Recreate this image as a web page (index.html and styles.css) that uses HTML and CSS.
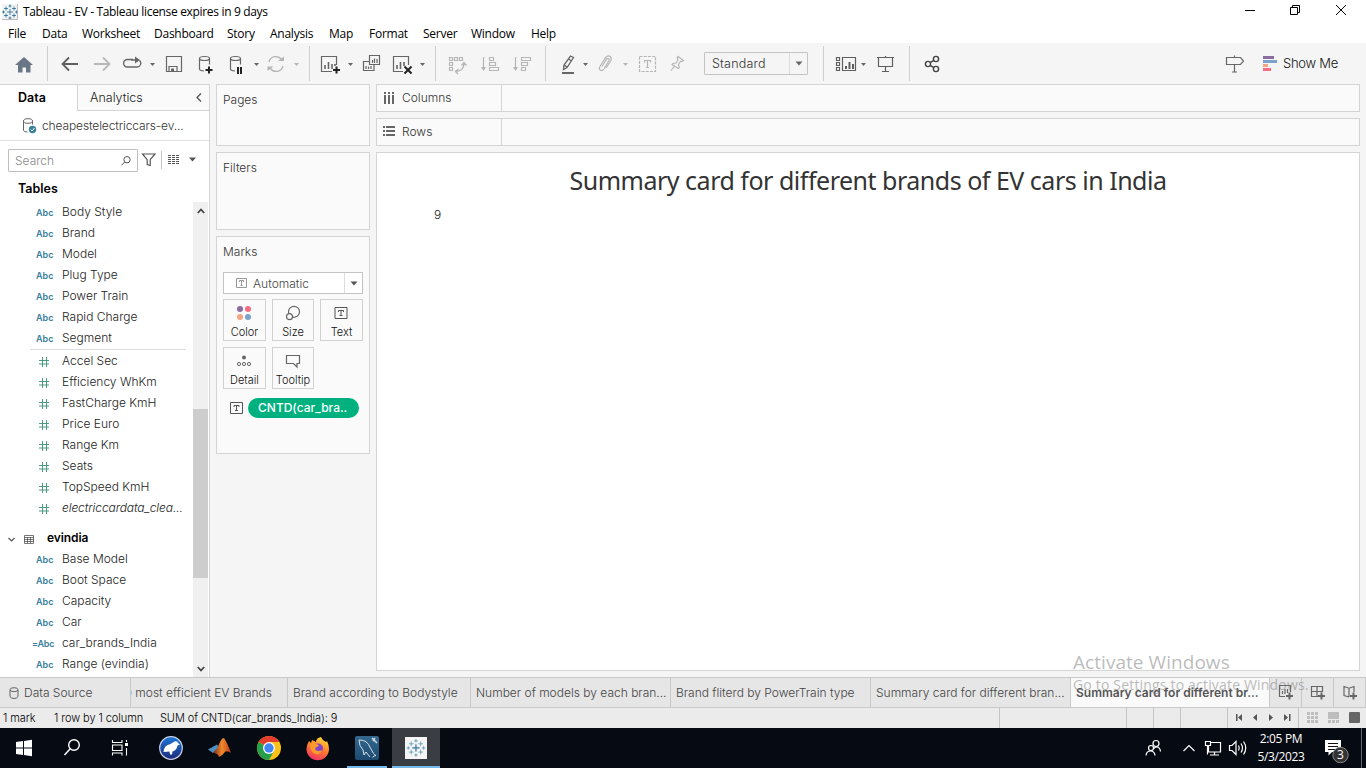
FILE: index.html
```html
<!DOCTYPE html>
<html lang="en">
<head>
<meta charset="utf-8">
<title>Tableau - EV</title>
<link rel="stylesheet" href="styles.css">
</head>
<body>
<svg class="defs" width="0" height="0" aria-hidden="true">
  <defs>
    <g id="mark">
      <path d="M8 5v6M5 8h6" />
      <path d="M4 2.5v4M2 4.5h4M12 2.5v4M10 4.5h4M4 9.500v4M2 11.500h4M12 9.500v4M10 11.500h4M8 .5v3M6.500 2h3M8 12.500v3M6.500 14h3M1.500 6.500v3M0 8h3M14.500 6.500v3M13 8h3" />
    </g>
    <g id="plus"><path d="M0 3.500h7M3.500 0v7" /></g>
    <path id="hash" d="M3.500 0v10M7.500 0v10M0 3.500h10M0 7h10" />
  </defs>
</svg>

<header class="titlebar">
  <svg class="logo" width="16" height="16" viewBox="0 0 16 16"><rect width="16" height="16" fill="#f2f2f2"/><use href="#mark" stroke="#1f6f9c" stroke-width=".8" fill="none"/><path d="M0 15.500h15.500V0" fill="none" stroke="#bbb"/></svg>
  <span class="titletext">Tableau - EV - Tableau license expires in 9 days</span>
  <svg class="winbtns" width="126" height="24" viewBox="1240 0 126 24" fill="none" stroke="#000"><path d="M1245 10.500h10M1290.500 7.500h7v7h-7zM1292.500 7.500v-2h7v7h-2M1336 5l10 10M1346 5l-10 10"/></svg>
</header>
<nav class="menu">
  <span style="width:34px">File</span><span style="width:40px">Data</span><span style="width:72px">Worksheet</span><span style="width:73px">Dashboard</span><span style="width:43px">Story</span><span style="width:59px">Analysis</span><span style="width:40px">Map</span><span style="width:54px">Format</span><span style="width:48px">Server</span><span style="width:60px">Window</span><span>Help</span>
</nav>

<div class="toolbar">
  <svg width="47" height="41" viewBox="0 43 47 41"><path d="M24 57l9 8h-2.500v7.500h-4.500v-5h-3.500v5h-4.500V65H15z" fill="#6a7685"/></svg>
  <i class="sep"></i>
  <svg width="68" height="41" viewBox="48 43 68 41" fill="none" stroke-width="1.800"><path d="M78 64H63M69 57.500L62.500 64l6.500 6.500" stroke="#5f5f5f"/><path d="M94 64h15M103 57.500l6.500 6.500-6.500 6.500" stroke="#b8b8b8"/></svg>
  <svg width="44" height="41" viewBox="116 43 44 41"><path d="M133 59.500h-6a4 3.800 0 0 0 0 7.500h10a3.700 3.700 0 0 0 2.500-6.500M131 60h6" fill="none" stroke="#666" stroke-width="1.300"/><path d="M135 56.500l5 3.500-5 3.500z" fill="#666"/><path d="M150 63h5l-2.500 3z" fill="#666"/></svg>
  <svg width="30" height="41" viewBox="160 43 30 41" fill="none" stroke="#666" stroke-width="1.200"><path d="M166.500 56.500h15v15h-15zM169 71v-4.500h8V71"/><path d="M171 68.500h3v3h-3z" fill="#666" stroke="none"/></svg>
  <svg width="30" height="41" viewBox="190 43 30 41" fill="none" stroke="#666" stroke-width="1.200"><ellipse cx="204.500" cy="58.500" rx="5" ry="2"/><path d="M199.500 58.500v10.500q0 1.800 4.500 2M209.500 58.500v6"/><use href="#plus" x="205.500" y="66.500" stroke="#222" stroke-width="2"/></svg>
  <svg width="42" height="41" viewBox="220 43 42 41" fill="none" stroke="#666" stroke-width="1.200"><ellipse cx="235.500" cy="58.500" rx="5" ry="2"/><path d="M230.500 58.500v10.500q0 1.800 4.500 2M240.500 58.500v6"/><path d="M238 67v7M241 67v7" stroke="#222" stroke-width="2"/><path d="M254 63h5l-2.500 3z" fill="#666" stroke="none"/></svg>
  <svg width="47" height="41" viewBox="262 43 47 41" fill="none" stroke="#b5b5b5" stroke-width="1.300"><path d="M269 62a7 7 0 0 1 12.500-2.500M283 66a7 7 0 0 1-12.500 2.500"/><path d="M278 61h6v-4.500zM267.500 66.500h6l-6 4.500z" fill="#b5b5b5" stroke="none"/><path d="M294 63h5l-2.500 3z" fill="#b5b5b5" stroke="none"/></svg>
  <i class="sep"></i>
  <svg width="47" height="41" viewBox="310 43 47 41" fill="none" stroke="#666"><path d="M332 71.500h-10.500v-15h15V65" stroke-width="1.200"/><path d="M325 69v-4M328.500 69v-7M332 69v-5M335 66v-2" stroke-width="1.600"/><use href="#plus" x="333" y="66.500" stroke="#222" stroke-width="2"/><path d="M348 63h5l-2.500 3z" fill="#666" stroke="none"/></svg>
  <svg width="29" height="41" viewBox="357 43 29 41" fill="none" stroke="#666" stroke-width="1.200"><path d="M369.500 55.500h10v9h-10zM369.500 61.500h-6v9h10.500v-6"/><path d="M372.500 63v-3M374.500 63v-4.500M377 63v-4M366 69v-3M368.500 69v-2.500M371 69v-3"/></svg>
  <svg width="49" height="41" viewBox="386 43 49 41" fill="none" stroke="#666"><path d="M403 71.500h-9.500v-15h15V65" stroke-width="1.200"/><path d="M397 69v-4M400.500 69v-7M404 66v-4" stroke-width="1.600"/><path d="M404.500 66.500l7 7M411.500 66.500l-7 7" stroke="#222" stroke-width="2"/><path d="M420 63h5l-2.500 3z" fill="#666" stroke="none"/></svg>
  <i class="sep"></i>
  <svg width="109" height="41" viewBox="436 43 109 41" fill="none" stroke="#b5b5b5" stroke-width="1.200">
    <path d="M449.500 57.500h3v3h-3zM454.500 57.500h3v3h-3zM459.500 57.500h3v3h-3zM449.500 62.500h3v3h-3zM449.500 67.500h3v3h-3zM464 63q0 8-8 8.500M461.500 65.500l2.500-3 2.500 3M458.500 69l-3 2.500 2.500 2.500"/>
    <path d="M483.500 57v12M489.500 57.500h4v3h-4zM489.500 62.500h6v3h-6zM489.500 67.500h9v3h-9zM515.500 57v12M521.500 57.500h9v3h-9zM521.500 62.500h6v3h-6zM521.500 67.500h4v3h-4z"/><path d="M481 67h5l-2.500 4zM513 67h5l-2.500 4z" fill="#b5b5b5" stroke="none"/>
  </svg>
  <i class="sep"></i>
  <svg width="44" height="41" viewBox="546 43 44 41"><path d="M570.500 56l3 1.500-6.500 10-3.500 2 .5-4.500zM568.500 59l3 2M564 65l3 2" fill="none" stroke="#666" stroke-width="1.300"/><path d="M562 72h12v2h-12zM583 63h5l-2.500 3z" fill="#666"/></svg>
  <svg width="42" height="41" viewBox="590 43 42 41"><path d="M602 66.500l4.500-7.500q1.500-1.500 2.500 0 .5 1-.5 2.500l-4.500 7.500q-2 2.500-3.800 1-1.700-1.500 0-4l5.500-8.500q2.500-2.500 4.500-1 2 1.500.5 4.500L606 68" fill="none" stroke="#b5b5b5" stroke-width="1.200"/><path d="M623 63h5l-2.500 3z" fill="#b5b5b5"/></svg>
  <svg width="60" height="41" viewBox="632 43 60 41" fill="none" stroke="#b5b5b5" stroke-width="1.200"><path d="M639.500 56.500h16v15h-16z" stroke-dasharray="3 1.200"/><path d="M644.500 62.500v-2h6v2M647.500 60.500v7M646 67.500h3M678 56.500l5.500 4-1.500 1-1.500-.2-2 3.200.7 3-1 1-6.200-4 1-1 3-.5 2-3.300-.8-1.800zM674.500 66l-3.500 4.500"/></svg>
  <div class="combo"><span>Standard</span><b><svg width="8" height="5" viewBox="0 0 8 5"><path d="M.5.500h7l-3.500 4z" fill="#666"/></svg></b></div>
  <i class="sep sep-combo"></i>
  <svg width="85" height="41" viewBox="824 43 85 41" fill="none" stroke="#5f5f5f" stroke-width="1.200"><path d="M842.500 57.500h13v13h-13zM836.500 57.500h3v3h-3zM836.500 62.500h3v3h-3zM836.500 67.500h3v3h-3z"/><path d="M846 69v-3M849.500 69v-7M853 69v-5" stroke-width="2"/><path d="M861 63h5l-2.500 3z" fill="#666" stroke="none"/><path d="M877 57.500h17M878.500 57.500v9h14v-9M885.500 56v1M885.500 66.500v5M882 71.500h7"/></svg>
  <i class="sep"></i>
  <svg width="50" height="41" viewBox="910 43 50 41" fill="none" stroke="#444" stroke-width="1.400"><circle cx="928" cy="64" r="2.600"/><circle cx="936" cy="59" r="2.600"/><circle cx="936" cy="69" r="2.600"/><path d="M930.200 62.700l3.600-2.300M930.200 65.400l3.600 2.200"/></svg>
  <svg class="right" width="60" height="41" viewBox="1223 43 60 41"><path d="M1226.500 57.500h14l3 3.500-3 3.500h-14zM1234.500 55.500v2M1234.500 64.500v7.500M1232 72h5" fill="none" stroke="#666" stroke-width="1.200"/><path d="M1263 56h11v3h-11z" fill="#8a6d9c"/><path d="M1263 60h14v3h-14z" fill="#7ba1cd"/><path d="M1263 64h5v3h-5z" fill="#f3a683"/><path d="M1263 68h8v3h-8z" fill="#fa6c81"/></svg>
  <span class="showme">Show Me</span>
</div>

<main class="work">
  <aside class="side">
    <div class="sidetabs"><span class="on">Data</span><span class="off">Analytics<svg width="6" height="9" viewBox="0 0 6 9"><path d="M5 .5l-4 4 4 4" fill="none" stroke="#555" stroke-width="1.300"/></svg></span></div>
    <div class="source"><svg width="15" height="16" viewBox="0 0 15 16" fill="none" stroke="#666"><ellipse cx="6" cy="3" rx="4.500" ry="2.300"/><path d="M1.500 3v9.500q1 1.500 4 1.500M10.500 3v3.500"/><circle cx="10.500" cy="11.500" r="3.700" fill="#39809d" stroke="none"/><path d="M8.700 11.500l1.500 1.500 2.300-3" stroke="#fff"/></svg><span>cheapestelectriccars-ev...</span></div>
    <div class="searchrow">
      <div class="search"><span>Search</span><svg width="10" height="10" viewBox="0 0 10 10" fill="none" stroke="#555"><circle cx="6" cy="3.700" r="3.200"/><path d="M3.700 6L.5 9.300"/></svg></div>
      <svg width="71" height="24" viewBox="138 149 71 24"><path d="M142.500 154h12.500l-4.800 5.700v5.800l-3-1v-4.800z" fill="none" stroke="#555" stroke-width="1.200"/><path d="M161.500 151v18" stroke="#c4c4c4"/><path d="M168 155.500h12M168 157.500h12M168 159.500h12M168 161.500h12M168 163.500h12" stroke="#555" stroke-dasharray="3 1" /><path d="M189 157.500h7l-3.500 4z" fill="#555"/></svg>
    </div>
    <h2 class="tables">Tables</h2>
    <div class="fields">
      <ul class="list">
        <li><em>Abc</em><span>Body Style</span></li>
        <li><em>Abc</em><span>Brand</span></li>
        <li><em>Abc</em><span>Model</span></li>
        <li><em>Abc</em><span>Plug Type</span></li>
        <li><em>Abc</em><span>Power Train</span></li>
        <li><em>Abc</em><span>Rapid Charge</span></li>
        <li><em>Abc</em><span>Segment</span></li>
        <li class="rule"></li>
        <li><svg class="num" width="10" height="10"><use href="#hash"/></svg><span>Accel Sec</span></li>
        <li><svg class="num" width="10" height="10"><use href="#hash"/></svg><span>Efficiency WhKm</span></li>
        <li><svg class="num" width="10" height="10"><use href="#hash"/></svg><span>FastCharge KmH</span></li>
        <li><svg class="num" width="10" height="10"><use href="#hash"/></svg><span>Price Euro</span></li>
        <li><svg class="num" width="10" height="10"><use href="#hash"/></svg><span>Range Km</span></li>
        <li><svg class="num" width="10" height="10"><use href="#hash"/></svg><span>Seats</span></li>
        <li><svg class="num" width="10" height="10"><use href="#hash"/></svg><span>TopSpeed KmH</span></li>
        <li><svg class="num" width="10" height="10"><use href="#hash"/></svg><span class="ital">electriccardata_clea...</span></li>
        <li class="group"><svg width="28" height="10" viewBox="7 533 28 10" fill="none" stroke="#555"><path d="M8.500 537l3 3 3-3" stroke-width="1.200"/><path d="M24.500 534.500h9v8h-9zM24 536.500h10M24 538.500h10M24 540.500h10M27.500 536v6M30.500 536v6" stroke-width=".8"/></svg><strong>evindia</strong></li>
        <li><em>Abc</em><span>Base Model</span></li>
        <li><em>Abc</em><span>Boot Space</span></li>
        <li><em>Abc</em><span>Capacity</span></li>
        <li><em>Abc</em><span>Car</span></li>
        <li><em class="calc">=Abc</em><span>car_brands_India</span></li>
        <li><em>Abc</em><span>Range (evindia)</span></li>
      </ul>
      <div class="scroll"><svg width="8" height="6" viewBox="0 0 8 6"><path d="M.8 5L4 1.500 7.200 5" fill="none" stroke="#444" stroke-width="1.800"/></svg><i></i><svg width="8" height="6" viewBox="0 0 8 6"><path d="M.8 1L4 4.500 7.200 1" fill="none" stroke="#444" stroke-width="1.800"/></svg></div>
    </div>
  </aside>

  <section class="cards">
    <div class="card pages">Pages</div>
    <div class="card filters">Filters</div>
    <div class="card marks">
      <div>Marks</div>
      <div class="marktype"><svg width="11" height="10" viewBox="0 0 11 10" fill="none" stroke="#999"><path d="M.5.500h10v9H.5zM3.500 4V2.500h4V4M5.500 2.500v5M4.500 7.500h2"/></svg><span>Automatic</span><b><svg width="8" height="5" viewBox="0 0 8 5"><path d="M.5.500h7l-3.500 4z" fill="#555"/></svg></b></div>
      <div class="grid">
        <div class="btn"><svg width="16" height="16" viewBox="1 0 16 16"><circle cx="4" cy="4" r="3" fill="#8a6d9c"/><circle cx="12" cy="4" r="3" fill="#fa6c81"/><circle cx="4" cy="12" r="3" fill="#f3a683"/><circle cx="12" cy="12" r="3" fill="#7ba1cd"/></svg>Color</div>
        <div class="btn"><svg width="16" height="16" viewBox="0 0 16 16" fill="none" stroke="#666" stroke-width="1.200"><circle cx="9" cy="6.800" r="5.500"/><circle cx="4.500" cy="11.700" r="3" fill="#fafafa"/></svg>Size</div>
        <div class="btn"><svg width="16" height="16" viewBox="1.500 0 16 16" fill="none" stroke="#555"><path d="M2.500 2.500h12v11h-12zM6 7V5.500h5V7M8.500 5.500v5M7 10.500h3"/></svg>Text</div>
        <div class="btn"><svg width="16" height="16" viewBox="1 0 16 16" fill="none" stroke="#666"><circle cx="8" cy="4.500" r="2" fill="#666" stroke="none"/><circle cx="3" cy="11" r="1.600"/><circle cx="8" cy="11" r="1.600"/><circle cx="13" cy="11" r="1.600"/></svg>Detail</div>
        <div class="btn"><svg width="16" height="16" viewBox="0 0 16 16" fill="none" stroke="#666" stroke-width="1.200"><path d="M1.500 2.500h13v8h-2.500v3.500l-3.500-3.500h-7z"/></svg>Tooltip</div>
      </div>
      <div class="pillrow"><svg width="13" height="12" viewBox="0 0 13 12" fill="none" stroke="#555"><path d="M.5.500h12v11H.5zM4 5V3.500h5V5M6.500 3.500v5M5 8.500h3"/></svg><span class="pill">CNTD(car_bra..</span></div>
    </div>
  </section>

  <section class="canvas">
    <div class="shelf"><div><svg width="12" height="12" viewBox="0 0 12 12" fill="#666"><path d="M1 0h2v2H1zM5 0h2v2H5zM9 0h2v2H9zM1 3h2v9H1zM5 3h2v9H5zM9 3h2v9H9z"/></svg><span>Columns</span></div></div>
    <div class="shelf"><div><svg width="12" height="12" viewBox="0 1 12 12" fill="#666"><path d="M0 1h2v2H0zM0 5h2v2H0zM0 9h2v2H0zM3 1h9v2H3zM3 5h9v2H3zM3 9h9v2H3z"/></svg><span>Rows</span></div></div>
    <div class="view"><h1>Summary card for different brands of EV cars in India</h1><p>9</p></div>
  </section>
</main>

<div class="sheets">
  <div class="ds"><svg width="10" height="12" viewBox="0 0 10 12" fill="none" stroke="#666"><ellipse cx="5" cy="2.700" rx="4" ry="2"/><path d="M1 2.700v7q1 1.800 4 1.800t4-1.800v-7"/></svg>Data Source</div>
  <div class="t1"><span>0 most efficient EV Brands</span></div>
  <div class="t2">Brand according to Bodystyle</div>
  <div class="t3">Number of models by each bran...</div>
  <div class="t3 t4">Brand fliterd by PowerTrain type</div>
  <div class="t3 t5">Summary card for different bran...</div>
  <div class="active">Summary card for different br...</div>
  <div class="new"><svg width="18" height="18" viewBox="0 0 18 18" fill="none" stroke="#666" stroke-width="1.200"><path d="M8 12.500H2.500v-11h11V8M5.500 10V7M8 10V5M10.500 9V5"/><use href="#plus" x="9" y="8.500" stroke-width="2"/></svg></div>
  <div class="new"><svg width="18" height="18" viewBox="0 0 18 18" fill="none" stroke="#666" stroke-width="1.200"><path d="M9 12.500H2.500v-10h11V8M2.500 7.500h11M8 2.500v10"/><use href="#plus" x="9" y="8.500" stroke-width="2"/></svg></div>
  <div class="new"><svg width="18" height="18" viewBox="0 0 18 18" fill="none" stroke="#666" stroke-width="1.200"><path d="M8 13L3 11.500v-9l5 1.700 5-1.700V8M8 4.200V13"/><use href="#plus" x="9" y="8.500" stroke-width="2"/></svg></div>
</div>

<footer class="status">
  <span class="s1">1 mark</span><span class="s2">1 row by 1 column</span><span class="s3">SUM of CNTD(car_brands_India): 9</span>
  <svg width="367" height="20" viewBox="999 708 367 20"><path d="M999.500 708v20M1126.500 708v20M1153.500 708v20M1180.500 708v20M1227.500 708v20M1298.500 708v20" stroke="#c4c4c4"/><path d="M1236 714h1.500v7h-1.500zM1242 714v7l-4-3.500zM1257 714v7l-4-3.500zM1269 714v7l4-3.500zM1284 714v7l4-3.500zM1289 714h1.500v7h-1.500z" fill="#555"/><path d="M1307 712h3v3h-3zM1311 712h3v3h-3zM1315 712h3v3h-3zM1307 716h3v3h-3zM1311 716h3v3h-3zM1315 716h3v3h-3zM1307 720h3v3h-3zM1311 720h3v3h-3zM1315 720h3v3h-3zM1328 712h11v7h-11zM1328 720h3v3h-3zM1332 720h3v3h-3zM1336 720h3v3h-3z" fill="#bdbdbd"/><rect x="1349" y="712" width="11" height="11" rx="1" fill="#666"/></svg>
</footer>

<footer class="taskbar">
  <svg width="440" height="40" viewBox="0 728 440 40">
    <defs>
      <linearGradient id="blue" x2="0" y2="1"><stop offset="0" stop-color="#1e78d8"/><stop offset="1" stop-color="#1b2a7c"/></linearGradient>
      <linearGradient id="fox" x1=".7" x2=".3" y2="1"><stop offset="0" stop-color="#ffd93b"/><stop offset=".5" stop-color="#ff7a2a"/><stop offset="1" stop-color="#f0306a"/></linearGradient>
      <linearGradient id="sql" x2="0" y2="1"><stop offset="0" stop-color="#35688f"/><stop offset="1" stop-color="#1c4a70"/></linearGradient>
      <linearGradient id="mat" x2="1"><stop offset="0" stop-color="#7c2618"/><stop offset=".5" stop-color="#f08a2c"/><stop offset="1" stop-color="#b93a16"/></linearGradient>
    </defs>
    <path d="M16 742l7-1v6.500h-7zM24 740.900l8-1.100v7.700h-8zM16 748.500h7v6.500l-7-1zM24 748.500h8v7.700l-8-1.100z" fill="#fff"/>
    <circle cx="74" cy="745" r="5.300" fill="none" stroke="#fff" stroke-width="1.400"/><path d="M70.200 748.800L64.500 755" stroke="#fff" stroke-width="1.500"/>
    <path d="M112.500 740v2.500h9.500V740M112.500 755.500V753h9.500v2.500M112.500 745h9.500v5.500h-9.500zM126.500 740v2M126.500 748v7.500" fill="none" stroke="#fff" stroke-width="1.100"/><rect x="125" y="743" width="3" height="3" fill="#fff"/>
    <circle cx="171" cy="748" r="11.300" fill="url(#blue)" stroke="#c9d3e8" stroke-width="1.200"/><path d="M163.500 752q.5-7 7-8l4-2.500q3-1 3.500 1.500l2 1.500-2.500 1q-1 5-5 6l-.5 3h-2l-.5-3q-3 0-6 .5z" fill="#fff"/>
    <path d="M208 749.500l9-5 2 3-6 5.500z" fill="#4d91c0"/><path d="M213 753q5-5 7-11 2-4 4-4 3 4 7 15-4-3-6-1-3 4-6 5-1-4-6-4z" fill="url(#mat)"/>
    <circle cx="269" cy="748" r="12" fill="#fbc117"/><path d="M269 748L258.600 742A12 12 0 0 1 279.400 742H269z" fill="#e33b2e"/><path d="M258.600 742A12 12 0 0 0 269 760l5-9-5-3z" fill="#269f4b"/><circle cx="269" cy="748" r="6" fill="#fff"/><circle cx="269" cy="748" r="4.700" fill="#4285f4"/>
    <path d="M309 741l2 2 1-3 4 2q0-4 5-5 1 3 5 5l1-1q2 4 2 8a11 11 0 0 1-22.500 0q0-4 2.500-8z" fill="url(#fox)"/><circle cx="318" cy="748.500" r="5" fill="#8144c9"/><path d="M310 744q4-1 6 0l3 1q-1 2-3.500 2.500-1 3 2.500 3.500 3 0 4.500-1-2 5-7 4t-5.500-10z" fill="#ff9a2c"/>
    <rect x="355" y="736" width="24" height="24" rx="2" fill="url(#sql)"/><path d="M359 740q7 0 9.500 4.500t5 9q1 1.500 2.500 2-2 0-3.500 2M359 740q0 6 4 10l1 5 2-3 4 5" fill="none" stroke="#d6e2ea" stroke-width="1"/><path d="M372 738l5 5M373 741l2-3" stroke="#cfdce6" stroke-width="1.500"/>
    <rect x="392" y="728" width="48" height="40" fill="#3a3e43"/><rect x="347" y="766" width="40" height="2" fill="#76b9ed"/><rect x="392" y="766" width="48" height="2" fill="#76b9ed"/><rect x="405" y="737" width="22" height="22" fill="#f5f5f5"/><g transform="translate(406.500 738.500) scale(1.180)" fill="none" stroke="#4a89ad"><use href="#mark" stroke-width=".6"/><path d="M8 5v6M5 8h6"/></g>
  </svg>
  <svg class="tray" width="112" height="40" viewBox="1140 728 112 40" fill="none" stroke="#fff" stroke-width="1.200"><circle cx="1156" cy="743.500" r="3"/><circle cx="1151" cy="748" r="2.500"/><path d="M1146 755.500q.5-4.500 4.500-4.500t4.500 4.500M1153.500 749q1-2 3-2 3.500 0 4 4.500M1183.500 751l5.500-5.500 5.500 5.500"/><path d="M1211 742.500h9.500v9.500h-12v-6M1214.500 752v3M1210 755h9M1205.500 741.500h5v4h-5zM1207.500 745.500v9" /><path d="M1229.500 745.500h2.500l4-4v13l-4-4h-2.500zM1238.500 745.500q1.500 2.500 0 5M1241 743.500q3 4.500 0 9M1243.500 741.500q4.500 6.500 0 13"/></svg>
  <div class="clock"><span>2:05 PM</span><span>5/3/2023</span></div>
  <div class="notes"><svg width="24" height="26" viewBox="1325 738 24 26"><path d="M1325 740h16v12h-9l-3.500 3.500V752h-3.500z" fill="#fff"/><path d="M1328 743.500h10M1328 746.500h10M1328 749.500h7" stroke="#111"/><circle cx="1340.500" cy="755" r="7.700" fill="#333" stroke="#888"/></svg><b>3</b></div>
  <i class="edge"></i>
</footer>

<div class="watermark"><div>Activate Windows</div><p>Go to Settings to activate Windows.</p></div>
</body>
</html>
```

FILE: styles.css
```css
* { box-sizing: border-box; }
body { margin: 0; width: 1366px; height: 768px; overflow: hidden; position: relative; background: #fff; color: #222; font: 300 12px/21px Inter, "Open Sans", sans-serif; display: flex; flex-direction: column; }
svg { display: block; flex: none; }
ul, h1, h2, p { margin: 0; padding: 0; }
.defs { position: absolute; }

.titlebar { height: 24px; display: flex; align-items: center; padding-left: 2px; font: 12px/24px "Open Sans", sans-serif; color: #000; letter-spacing: -.33px; }
.logo { margin-right: 5px; }
.winbtns { margin-left: auto; }
.menu { height: 19px; display: flex; padding-left: 8px; font: 12px/19px "Open Sans", sans-serif; color: #000; letter-spacing: -.25px; }

.toolbar { height: 41px; background: #f5f5f5; display: flex; align-items: center; }
.sep { width: 1px; height: 35px; background: #cfcfcf; flex: none; }
.combo { width: 104px; height: 23px; margin-left: 12px; border: 1px solid #c4c4c4; border-radius: 1px; display: flex; color: #333; font-size: 12.500px; letter-spacing: .2px; flex: none; }
.combo span { flex: 1; padding-left: 7px; }
.combo b { width: 18px; border-left: 1px solid #ddd; display: grid; place-items: center; }
.sep-combo { margin-left: 15px; }
.right { margin-left: auto; }
.showme { width: 83px; font-size: 13px; color: #111; letter-spacing: -.25px; }

.work { height: 593px; display: flex; background: #f5f5f5; }
.side { width: 210px; background: #fff; border-right: 1px solid #d4d4d4; display: flex; flex-direction: column; }
.sidetabs { height: 27px; display: flex; border-top: 1px solid #d4d4d4; line-height: 25px; font-size: 12.500px; }
.on { width: 77px; padding-left: 18px; font-weight: 600; color: #000; }
.off { flex: 1; background: #fafafa; border-left: 1px solid #d4d4d4; border-bottom: 1px solid #d4d4d4; padding: 0 7px 0 12px; display: flex; justify-content: space-between; align-items: center; }
.source { height: 30px; border-bottom: 1px solid #e0e0e0; display: flex; align-items: center; gap: 5px; padding-left: 22px; color: #333; letter-spacing: -.12px; }
.source span { margin-top: -1px; }
.searchrow { display: flex; padding: 8px 0 0 8px; height: 34px; }
.search { width: 130px; height: 23px; border: 1px solid #bfbfbf; border-radius: 1px; display: flex; justify-content: space-between; align-items: center; padding: 0 6px; color: #888; flex: none; }
.tables { font-size: 12.500px; line-height: 28px; height: 27px; padding-left: 18px; font-weight: 600; color: #000; }
.fields { flex: 1; display: flex; min-height: 0; }
.list { width: 193px; list-style: none; overflow: hidden; }
.list li { height: 21px; display: flex; align-items: center; white-space: nowrap; }
.list li > span, .list strong { margin-top: -2px; }
.list em { width: 62px; padding-left: 36px; font: 600 9px/21px Inter, sans-serif; color: #39809d; flex: none; }
.list em.calc { padding-left: 32px; letter-spacing: -.2px; }
.list .num { margin: 0 13px 0 39px; stroke: #4a9b7f; fill: none; }
.list .rule { height: 2px; margin: 0 7px 0 30px; background: linear-gradient(#ddd 1px, #fff 1px); }
.list .ital { font-style: italic; letter-spacing: -.1px; }
.list .group { margin-top: 9px; padding-left: 7px; gap: 12px; color: #000; }
.list strong { font-weight: 600; letter-spacing: -.1px; }
.scroll { width: 15px; background: #f0f0f0; display: flex; flex-direction: column; align-items: center; padding: 6px 0 5px; }
.scroll i { width: 15px; height: 169px; background: #cdcdcd; margin: 195px 0 auto; }

.cards { width: 154px; margin-left: 6px; display: flex; flex-direction: column; gap: 6px; }
.card { border: 1px solid #d4d4d4; background: #fafafa; padding: 4px 6px; color: #333; }
.pages { height: 62px; }
.filters { height: 78px; }
.marks { height: 218px; }
.marktype { margin-top: 10px; height: 22px; border: 1px solid #c4c4c4; background: #fff; display: flex; align-items: center; color: #444; }
.marktype span { flex: 1; padding-left: 6px; }
.marktype > svg { margin-left: 12px; }
.marktype b { width: 18px; height: 20px; border-left: 1px solid #ddd; display: grid; place-items: center; }
.grid { display: grid; grid-template-columns: 43px 42px 43px; gap: 6px; margin-top: 5px; }
.btn { height: 42px; border: 1px solid #d0d0d0; display: flex; flex-direction: column; align-items: center; padding-top: 5px; font-size: 11px; line-height: 22px; color: #111; }
.pillrow { display: flex; align-items: center; margin: 9px 0 0 7px; gap: 5px; }
.pill { width: 111px; height: 20px; border-radius: 10px; background: #00b180; color: #fff; font-weight: 500; line-height: 20px; padding-left: 10px; }

.canvas { flex: 1; margin: 0 6px 0 6px; display: flex; flex-direction: column; gap: 6px; }
.shelf { height: 28px; border: 1px solid #d4d4d4; background: #fafafa; color: #333; }
.shelf div { width: 125px; height: 26px; border-right: 1px solid #d4d4d4; display: flex; align-items: center; gap: 7px; padding-left: 6px; }
.shelf span { margin-top: -1px; }
.view { height: 519px; background: #fff; border: 1px solid #d4d4d4; }
.view h1 { text-align: center; font: 25px/34px "Noto Sans", sans-serif; margin-top: 10px; color: #333; letter-spacing: -.49px; }
.view p { padding-left: 57px; margin-top: 7px; }

.sheets { height: 31px; display: flex; background: #e6e6e6; border-top: 1px solid #c9c9c9; border-bottom: 1px solid #c9c9c9; line-height: 29px; color: #444; white-space: nowrap; }
.sheets > div { border-right: 1px solid #c9c9c9; padding-left: 5px; overflow: hidden; flex: none; }
.sheets .ds { width: 131px; padding-left: 9px; display: flex; align-items: center; gap: 5px; }
.sheets .t1 { width: 157px; padding: 0 15px 0 0; display: flex; justify-content: flex-end; }
.sheets .t2 { width: 183px; }
.sheets .t3 { width: 200px; }
.sheets .active { width: 199px; background: #fafafa; font-weight: 600; color: #555; }
.sheets .new { width: 32px; padding: 6px 0 0 7px; }
.status { height: 20px; display: flex; background: #ebebeb; font-size: 11px; line-height: 20px; color: #000; padding-left: 3px; letter-spacing: -.08px; }
.s1 { width: 51px; }
.s2 { width: 106px; }
.status svg { margin-left: auto; }

.taskbar { height: 40px; background: #060a12; display: flex; color: #fff; }
.tray { margin-left: auto; }
.clock { width: 58px; display: flex; flex-direction: column; text-align: center; font: 12px/18px "Open Sans", sans-serif; letter-spacing: -.35px; padding-top: 2px; }
.notes { position: relative; margin: 10px 0 0 15px; width: 24px; }
.notes b { position: absolute; left: 12px; top: 8px; font: 12px/18px "Open Sans", sans-serif; }
.edge { margin-left: 12px; width: 5px; border-left: 1px solid #63676d; }

.watermark { position: absolute; left: 1073px; top: 649px; font-family: "Open Sans", sans-serif; font-weight: 400; color: rgba(120, 120, 120, .5); white-space: nowrap; }
.watermark div { font-size: 19px; line-height: 26px; letter-spacing: .05px; }
.watermark p { font-size: 14px; line-height: 20px; letter-spacing: .18px; }
```
